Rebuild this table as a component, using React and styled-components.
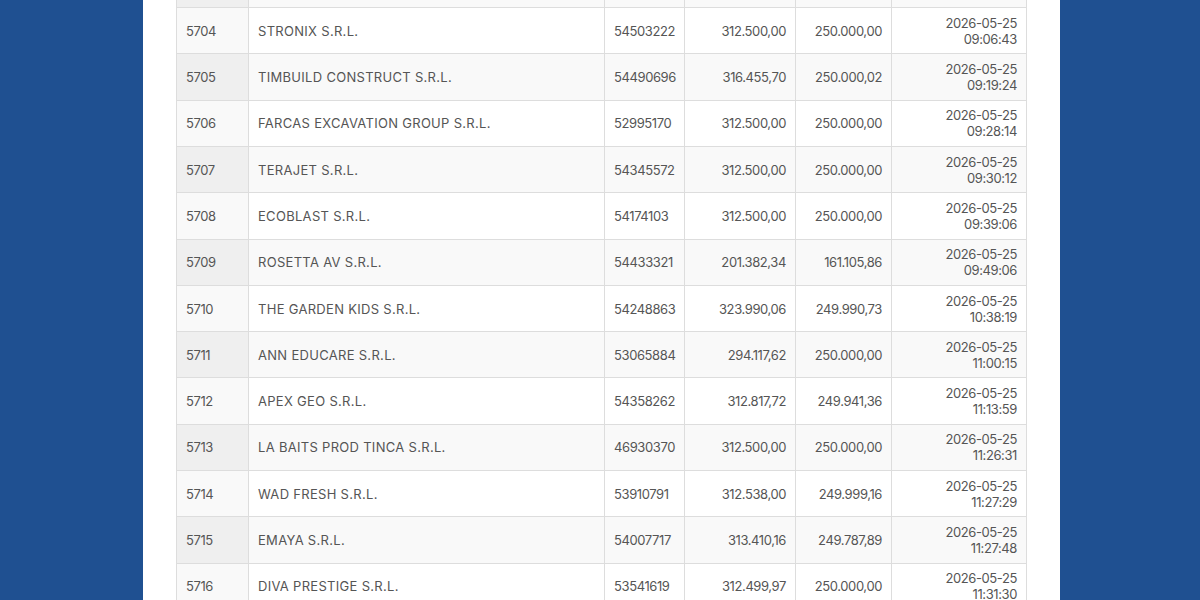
import React from "react";
import styled, { createGlobalStyle } from "styled-components";

const rows = [
  ["", "", "", "", "", ["", ""]],
  ["5704", "STRONIX S.R.L.", "54503222", "312.500,00", "250.000,00", ["2026-05-25", "09:06:43"]],
  ["5705", "TIMBUILD CONSTRUCT S.R.L.", "54490696", "316.455,70", "250.000,02", ["2026-05-25", "09:19:24"]],
  ["5706", "FARCAS EXCAVATION GROUP S.R.L.", "52995170", "312.500,00", "250.000,00", ["2026-05-25", "09:28:14"]],
  ["5707", "TERAJET S.R.L.", "54345572", "312.500,00", "250.000,00", ["2026-05-25", "09:30:12"]],
  ["5708", "ECOBLAST S.R.L.", "54174103", "312.500,00", "250.000,00", ["2026-05-25", "09:39:06"]],
  ["5709", "ROSETTA AV S.R.L.", "54433321", "201.382,34", "161.105,86", ["2026-05-25", "09:49:06"]],
  ["5710", "THE GARDEN KIDS S.R.L.", "54248863", "323.990,06", "249.990,73", ["2026-05-25", "10:38:19"]],
  ["5711", "ANN EDUCARE S.R.L.", "53065884", "294.117,62", "250.000,00", ["2026-05-25", "11:00:15"]],
  ["5712", "APEX GEO S.R.L.", "54358262", "312.817,72", "249.941,36", ["2026-05-25", "11:13:59"]],
  ["5713", "LA BAITS PROD TINCA S.R.L.", "46930370", "312.500,00", "250.000,00", ["2026-05-25", "11:26:31"]],
  ["5714", "WAD FRESH S.R.L.", "53910791", "312.538,00", "249.999,16", ["2026-05-25", "11:27:29"]],
  ["5715", "EMAYA S.R.L.", "54007717", "313.410,16", "249.787,89", ["2026-05-25", "11:27:48"]],
  ["5716", "DIVA PRESTIGE S.R.L.", "53541619", "312.499,97", "250.000,00", ["2026-05-25", "11:31:30"]],
];

const GlobalStyle = createGlobalStyle`
  html, body {
    margin: 0;
    padding: 0;
    background: #1f5091;
    overflow: hidden;
  }
  body {
    font-family: Inter, "Liberation Sans", sans-serif;
  }
`;

const Page = styled.div`
  height: 600px;
  overflow: hidden;
`;

const Panel = styled.div`
  width: 917px;
  margin-left: 143px;
  background: #fff;
  padding: 0 34px 0 33px;
  box-sizing: border-box;
  min-height: 600px;
`;

const Table = styled.table`
  width: 850px;
  border-collapse: collapse;
  table-layout: fixed;
  margin-top: -39.33px;
  font-size: 13px;
  line-height: 16px;
  color: #555;
`;

const Row = styled.tr`
  background: ${(p) => (p.$striped ? "#f9f9f9" : "#fff")};
`;

const Cell = styled.td`
  border: 1px solid #ddd;
  padding: 6.67px 9px 6.66px;
  text-align: ${(p) => (p.$right ? "right" : "left")};
  letter-spacing: ${(p) => (p.$num ? "-0.4px" : "0.3px")};
  white-space: nowrap;
  height: 32px;
  box-sizing: content-box;
`;

const IdCell = styled(Cell)`
  background: ${(p) => (p.$striped ? "#efefef" : "#f9f9f9")};
`;

const widths = [72, 356, 80, 111, 96, 135];

export default function App() {
  return (
    <Page>
      <GlobalStyle />
      <Panel>
        <Table>
          <colgroup>
            {widths.map((w, i) => (
              <col key={i} style={{ width: w }} />
            ))}
          </colgroup>
          <tbody>
            {rows.map((r, i) => {
              const striped = i % 2 === 0;
              return (
                <Row key={i} $striped={striped}>
                  <IdCell $striped={striped} $num>{r[0]}</IdCell>
                  <Cell>{r[1]}</Cell>
                  <Cell $num>{r[2]}</Cell>
                  <Cell $num $right>{r[3]}</Cell>
                  <Cell $num $right>{r[4]}</Cell>
                  <Cell $num $right>
                    {r[5][0]}
                    <br />
                    {r[5][1]}
                  </Cell>
                </Row>
              );
            })}
          </tbody>
        </Table>
      </Panel>
    </Page>
  );
}
